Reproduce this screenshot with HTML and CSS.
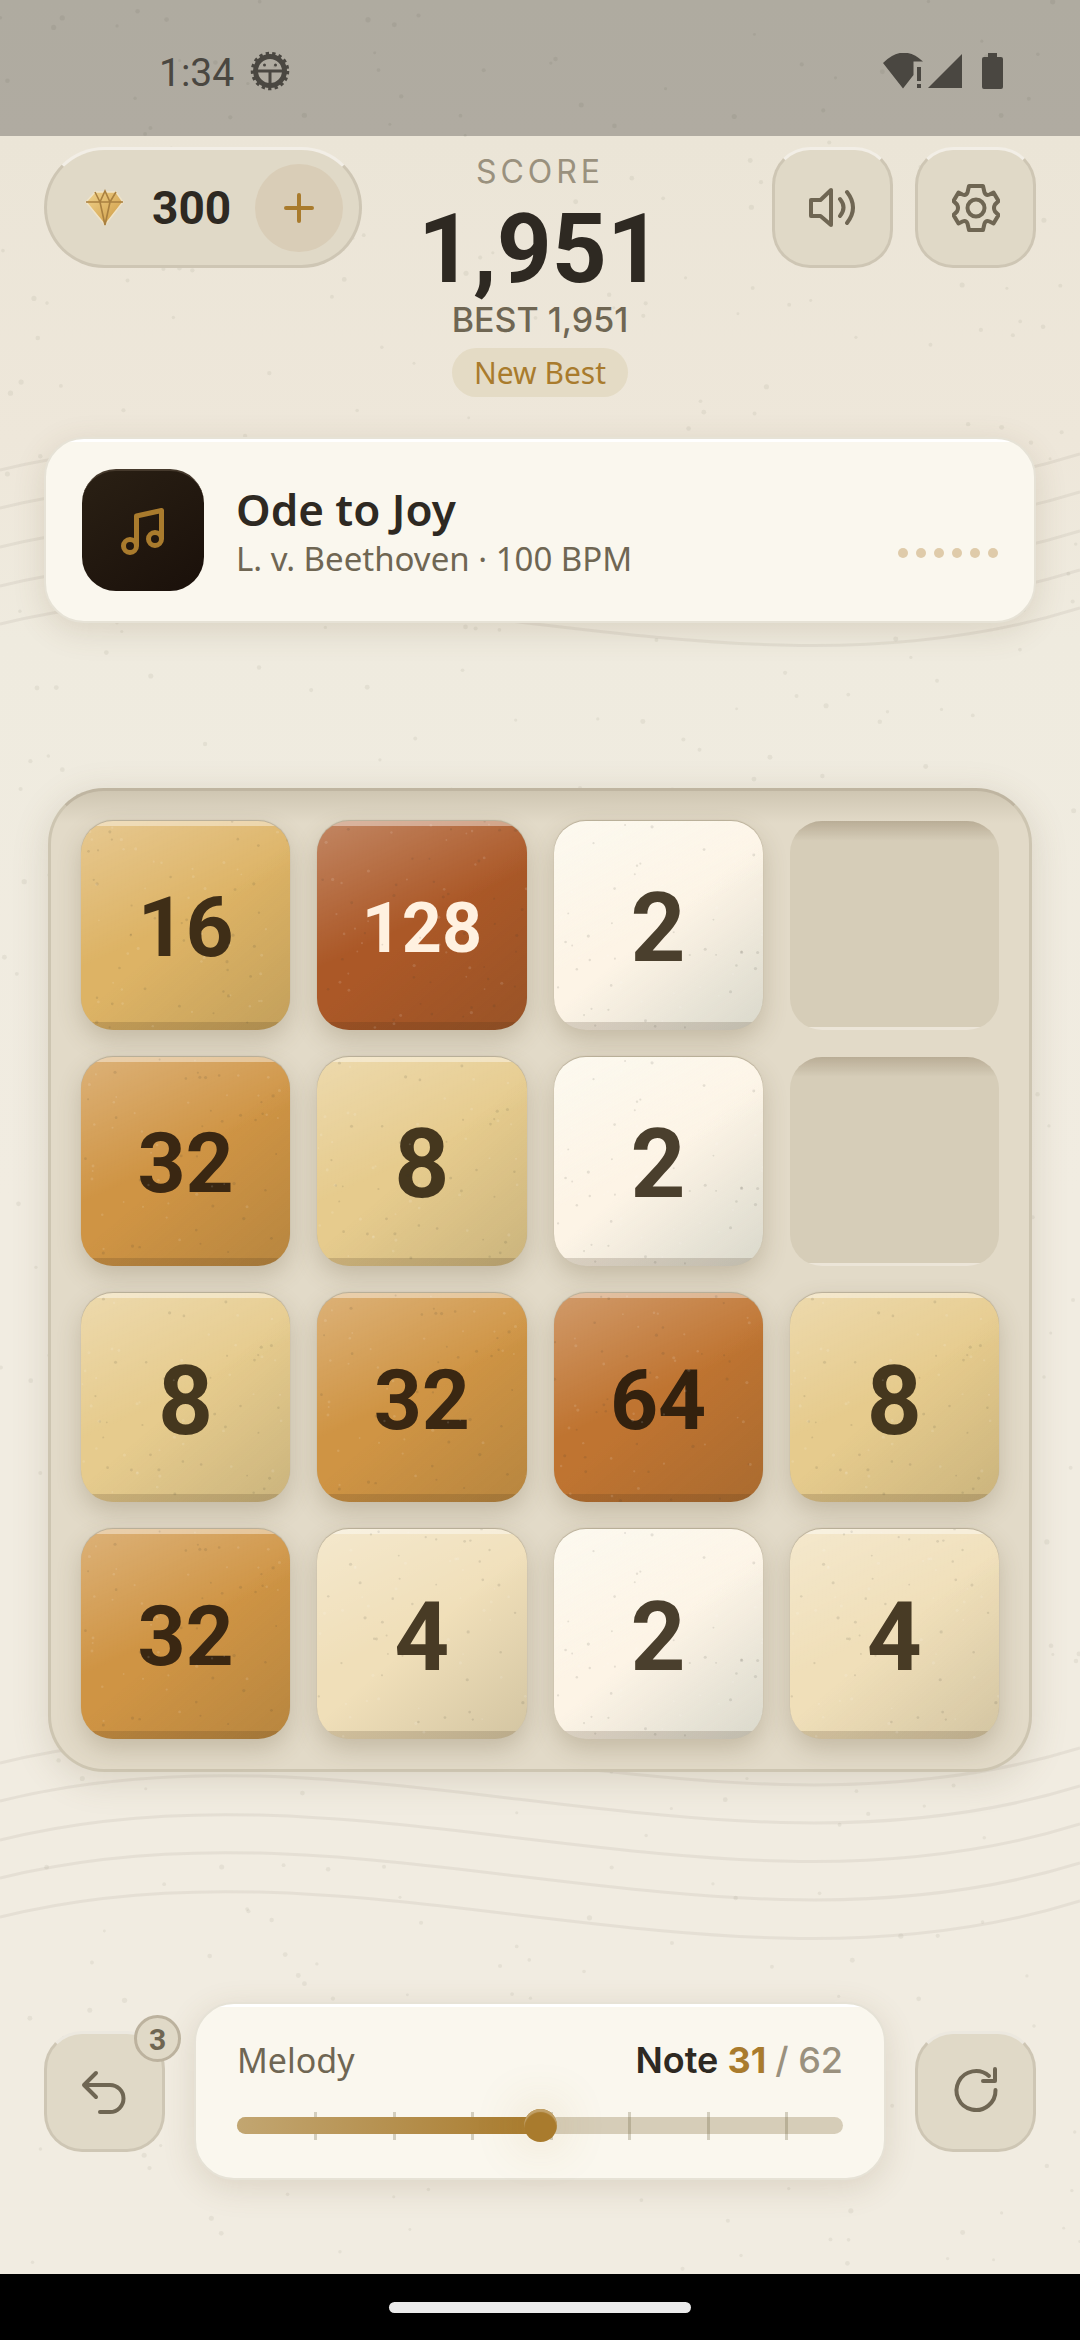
FILE: index.html
```html
<!DOCTYPE html>
<html lang="en">
<head>
<meta charset="utf-8">
<meta name="viewport" content="width=device-width, initial-scale=1">
<title>Melody 2048</title>
<link rel="stylesheet" href="styles.css">
</head>
<body>
<svg class="backdrop" viewBox="0 0 1080 2340" preserveAspectRatio="xMidYMin slice" aria-hidden="true">
  <g class="staff">
    <path d="M0 470C360 380 720 567 1080 454"/>
    <path d="M0 508C360 418 720 605 1080 492"/>
    <path d="M0 547C360 457 720 644 1080 531"/>
    <path d="M0 586C360 496 720 683 1080 570"/>
    <path d="M0 624C360 534 720 721 1080 608"/>
    <path d="M0 1763C360 1673 720 1860 1080 1748"/>
    <path d="M0 1801C360 1711 720 1898 1080 1786"/>
    <path d="M0 1840C360 1750 720 1937 1080 1824"/>
    <path d="M0 1878C360 1788 720 1975 1080 1863"/>
    <path d="M0 1917C360 1827 720 2014 1080 1901"/>
  </g>
  <g class="specks" data-specks="620" data-w="1080" data-h="2340" data-r="2.4" data-seed="7"></g>
</svg>

<div class="status">
  <span class="clock">1:34</span>
  <svg class="bug" viewBox="0 0 40 40" aria-hidden="true">
    <circle cx="20" cy="20" r="14.500" fill="none" stroke="#4a4741" stroke-width="5"/>
    <circle cx="20" cy="20" r="17.500" fill="none" stroke="#4a4741" stroke-width="3.500" stroke-dasharray="3.300 3.172"/>
    <path d="M6 20H34M20 20V35" stroke="#4a4741" stroke-width="3"/>
    <circle cx="14.500" cy="14" r="1.500" fill="#4a4741"/><circle cx="25.500" cy="14" r="1.500" fill="#4a4741"/>
  </svg>
  <svg class="signals" viewBox="0 0 120 36" aria-hidden="true">
    <path d="M0 10Q20-10 40 8.500H30.500V22L20 35.500Z"/>
    <path d="M34 14h4v14h-4zM34 31h4v4h-4zM45 35 79 1V35Z"/>
    <path d="M105 0h9v4h4q2 0 2 2v28q0 2-2 2h-17q-2 0-2-2V6q0-2 2-2h4z"/>
  </svg>
</div>

<header class="top">
  <div class="gems">
    <svg class="gem" viewBox="0 0 40 38" aria-hidden="true">
      <defs><linearGradient id="gold" x1="0" y1="0" x2="1" y2="1"><stop offset="0" stop-color="#f0d38d"/><stop offset="1" stop-color="#cd9840"/></linearGradient></defs>
      <path d="M10 3H31L38 13 20 36 1 13Z" fill="url(#gold)" stroke="#efe3c8" stroke-width="1.500"/>
      <path d="M1 13H38M10 3 15 13 20 2 25 13 31 3M15 13 20 36 25 13" fill="none" stroke="#a98040" stroke-width="1.600"/>
    </svg>
    <span class="gem-count">300</span>
    <button class="add" aria-label="Add gems"><svg viewBox="0 0 32 32"><path d="M16 3V29M3 16H29"/></svg></button>
  </div>
  <div class="score">
    <span class="score-label">SCORE</span>
    <strong class="score-value">1,951</strong>
    <span class="score-best">BEST 1,951</span>
    <span class="score-flag">New Best</span>
  </div>
  <div class="actions">
    <button class="key" aria-label="Sound"><svg viewBox="0 0 48 48"><path d="M2 16H11.500L22 6V41L11.500 32H2ZM31 15Q38 23.500 31 32M38 8Q50 23.500 38 39"/></svg></button>
    <button class="key" aria-label="Settings"><svg viewBox="0 0 48 48"><g transform="translate(24 24)"><path d="M-7-22H7L8.500-15.500Q10-12 13.500-13.500L17.500-15.500 22.500-7 19-3.500Q17 0 19 3.500L22.500 7 17.500 15.500 13.500 13.500Q10 12 8.500 15.500L7 22H-7L-8.500 15.500Q-10 12-13.500 13.500L-17.500 15.500-22.500 7-19 3.500Q-17 0-19-3.500L-22.500-7-17.500-15.500-13.500-13.500Q-10-12-8.500-15.500Z"/><circle r="8.500"/></g></svg></button>
  </div>
</header>

<section class="panel song">
  <div class="cover"><svg viewBox="0 0 48 48" aria-hidden="true"><circle cx="11" cy="39" r="6.500"/><circle cx="36" cy="32" r="6.500"/><path d="M17.500 39V9L42.500 3.500V32"/></svg></div>
  <div class="song-text">
    <h1>Ode to Joy</h1>
    <p>L. v. Beethoven · 100 BPM</p>
  </div>
  <div class="dots" aria-hidden="true"><i></i><i></i><i></i><i></i><i></i><i></i></div>
</section>

<main class="stage">
  <div class="board">
    <div class="tile t16">16</div><div class="tile t128">128</div><div class="tile t2">2</div><div class="slot"></div>
    <div class="tile t32">32</div><div class="tile t8">8</div><div class="tile t2">2</div><div class="slot"></div>
    <div class="tile t8">8</div><div class="tile t32">32</div><div class="tile t64">64</div><div class="tile t8">8</div>
    <div class="tile t32">32</div><div class="tile t4">4</div><div class="tile t2">2</div><div class="tile t4">4</div>
  </div>
</main>

<footer class="controls">
  <button class="key" aria-label="Undo, 3 left"><svg viewBox="0 0 48 48"><path d="M15 6 3 18 15 30M3 18H29A13.500 13.500 0 0 1 29 45H19"/></svg><span class="badge">3</span></button>
  <div class="panel melody">
    <div class="melody-head">
      <label for="note">Melody</label>
      <output for="note" class="note">Note <b>31</b> <span>/ 62</span></output>
    </div>
    <div class="slider">
      <div class="rail"></div>
      <div class="ticks" aria-hidden="true"><i></i><i></i><i></i><i></i><i></i><i></i><i></i></div>
      <div class="played" style="width: 50%"></div>
      <input id="note" type="range" min="0" max="62" value="31">
    </div>
  </div>
  <button class="key" aria-label="Restart"><svg viewBox="0 0 48 48"><path d="M43.500 23A19.500 19.500 0 1 1 37 9M43 2V14H31"/></svg></button>
</footer>

<nav class="gesture"><span></span></nav>
<script src="specks.js"></script>
</body>
</html>
```
FILE: styles.css
```css
* { box-sizing: border-box; }

body {
  margin: 0;
  min-height: 100vh;
  display: flex;
  flex-direction: column;
  position: relative;
  background: linear-gradient(#eae4d6 0, #ebe5d7 136px, #eee7da 440px, #efebdf 640px, #f1ece1 1200px);
  font-family: Inter, "Noto Sans", sans-serif;
  color: #2e2922;
}

button { border: 0; padding: 0; font: inherit; color: inherit; }
svg { display: block; }

.backdrop { position: absolute; inset: 0; width: 100%; height: 100%; z-index: -1; }
.staff path { fill: none; stroke: #6e6754; stroke-opacity: .09; stroke-width: 3; }
.specks { fill: #6f6a55; fill-opacity: .09; }

.status {
  height: 136px;
  padding: 0 77px 0 159px;
  display: flex;
  align-items: center;
  gap: 16px;
  background: rgba(0, 0, 0, .25);
}
.clock { font: 39px/48px Roboto, sans-serif; color: #4a4741; margin-top: 10px; }
.bug { width: 40px; height: 40px; margin-top: 6px; }
.signals { width: 120px; height: 36px; margin: 6px 0 0 auto; fill: #4a4741; }

.top {
  display: grid;
  grid-template-columns: 1fr auto 1fr;
  align-items: start;
  padding: 11px 44px 0;
}

.gems, .key {
  height: 121px;
  background: #e0d9c7;
  border: 3px solid #cec6b4;
  border-top-color: #f2eee6;
}
.gems {
  justify-self: start;
  display: flex;
  align-items: center;
  padding: 0 16px 0 38px;
  border-radius: 61px;
}
.gem { width: 40px; height: 38px; margin-right: 27px; }
.gem-count { font: 700 46px/54px Roboto, sans-serif; margin-right: 24px; }
.add { width: 88px; height: 88px; border-radius: 50%; background: #d9cdb7; display: grid; place-items: center; }
.add svg { width: 32px; height: 32px; fill: none; stroke: #a97b2d; stroke-width: 4; stroke-linecap: round; }

.actions { justify-self: end; display: flex; gap: 22px; }
.key { position: relative; width: 121px; border-radius: 38px; display: grid; place-items: center; flex: none; }
.key svg { width: 48px; height: 48px; fill: none; stroke: #6f6653; stroke-width: 4; stroke-linecap: round; stroke-linejoin: round; }

.score { display: flex; flex-direction: column; align-items: center; }
.score-label { font-size: 32px; line-height: 50px; letter-spacing: 4px; color: #9a917e; }
.score-value { font: 700 96px/104px Roboto, sans-serif; }
.score-best { font-size: 34px; line-height: 38px; font-weight: 500; color: #6f6653; }
.score-flag {
  margin-top: 9px;
  padding: 0 22px;
  border-radius: 25px;
  background: #e4dbc5;
  color: #a97b2d;
  font: 30px/49px "Noto Sans", sans-serif;
}

.panel {
  background: linear-gradient(#fff 3px, transparent 3px) #faf7ee;
  border: 2px solid #e6e2d6;
  border-radius: 40px;
  box-shadow: 0 8px 32px rgba(110, 85, 50, .16);
}

.song { margin: 40px 44px 0; padding: 30px 36px; display: flex; align-items: center; }
.cover {
  width: 122px;
  height: 122px;
  border-radius: 34px;
  display: grid;
  place-items: center;
  background: linear-gradient(145deg, #2a2014, #1a100a);
  border-top: 2px solid #45392c;
}
.cover svg { width: 48px; height: 48px; fill: none; stroke: #a97b2d; stroke-width: 5; stroke-linejoin: round; }
.song-text { margin-left: 32px; padding-top: 4px; }
h1 { margin: 0; font: 600 44px/54px "Noto Sans", sans-serif; }
p { margin: 0; font: 33px/46px "Noto Sans", sans-serif; color: #6f6653; }
.dots { margin: 46px 0 0 auto; display: flex; gap: 8px; }
.dots i { width: 10px; height: 10px; border-radius: 50%; background: #dfcbaa; }

.stage { flex: 1; display: flex; flex-direction: column; justify-content: center; padding: 0 48px 66px; }
.board {
  display: grid;
  grid-template-columns: repeat(4, 1fr);
  gap: 27px;
  padding: 30px;
  border: 3px solid #cdc5b1;
  border-top-color: #bfb5a1;
  border-radius: 56px;
  background: linear-gradient(#cfc6b2, rgba(207, 198, 178, 0) 32px) #e2dac8;
  box-shadow: 0 8px 36px rgba(110, 95, 60, .18);
}
.tile, .slot { aspect-ratio: 1; border-radius: 32px; }
.slot {
  background:
    linear-gradient(0deg, #ece5d8 3px, transparent 3px),
    linear-gradient(#b9ad96, rgba(185, 173, 150, 0) 20px),
    #d6cdb8;
}
.tile {
  position: relative;
  display: grid;
  place-items: center;
  padding-top: 6px;
  font: 700 96px/1 Roboto, sans-serif;
  background:
    linear-gradient(rgba(255, 255, 255, .4) 5px, transparent 5px),
    linear-gradient(0deg, rgba(60, 40, 20, .17) 8px, transparent 8px),
    linear-gradient(155deg, rgba(255, 255, 255, .28), rgba(255, 255, 255, 0) 48%),
    linear-gradient(140deg, rgba(60, 60, 40, 0) 50%, rgba(60, 60, 40, .16)),
    var(--face);
  box-shadow: 0 10px 24px rgba(100, 85, 50, .24), 0 -1px 1px rgba(120, 105, 75, .35);
}
.tile svg { position: absolute; inset: 0; width: 100%; height: 100%; border-radius: 32px; }
.tile .dark { fill: #3c3c32; fill-opacity: .12; }
.tile .light { fill: #fff; fill-opacity: .12; }
.t2 {
  --face: #fdf4e6;
  color: #4a3f2d;
  background:
    linear-gradient(0deg, rgba(60, 40, 20, .17) 8px, transparent 8px),
    linear-gradient(155deg, #fcf9ef, rgba(252, 249, 239, 0) 50%),
    linear-gradient(140deg, rgba(221, 219, 206, 0) 50%, #dddbce 95%),
    var(--face);
}
.t4 { --face: #f0dfb9; color: #483b25; }
.t8 { --face: #e6cb8d; color: #45371e; }
.t16 { --face: #ddb365; color: #3f2e17; font-size: 84px; }
.t32 { --face: #cf9444; color: #3a2712; font-size: 84px; }
.t64 { --face: #bf7431; color: #33210e; font-size: 84px; }
.t128 { --face: #ab5827; color: #fff1e0; font-size: 70px; }

.controls { display: flex; align-items: center; gap: 29px; padding: 0 44px 94px; }
.controls .key { border-top-color: #ece8df; }
.badge {
  position: absolute;
  top: -19px;
  right: -19px;
  width: 47px;
  height: 47px;
  border: 3px solid #bcb29e;
  border-radius: 50%;
  background: #e0d9c7;
  color: #6f6653;
  font: 700 30px/43px Roboto, sans-serif;
  text-align: center;
}
.melody { flex: 1; min-width: 0; padding: 34px 41px 36px; }
.melody-head { display: flex; justify-content: space-between; margin-bottom: 27px; }
.melody-head label { font: 34px/44px "Noto Sans", sans-serif; color: #6f6653; }
.note { font-size: 36px; line-height: 44px; font-weight: 600; }
.note b { color: #a97b2d; font-weight: 700; }
.note span { color: #9a917e; font-weight: 500; }

.slider { display: grid; align-items: center; }
.slider > * { grid-area: 1 / 1; }
.rail, .played { height: 17px; border-radius: 9px; }
.rail { background: #d6cdb8; }
.played { background: linear-gradient(90deg, #c2a671, #a97b2d); }
.ticks { display: flex; justify-content: space-between; padding: 0 55px 0 77px; }
.ticks i { width: 3px; height: 28px; background: rgba(110, 100, 70, .28); }
input[type=range] { appearance: none; margin: 0; width: 100%; height: 33px; background: none; }
input[type=range]::-webkit-slider-thumb {
  appearance: none;
  width: 33px;
  height: 33px;
  border-radius: 50%;
  background: #a97b2d;
  box-shadow: 0 0 50px rgba(169, 123, 45, .3), inset 0 3px 1px #c2a26a;
}

.gesture { height: 66px; background: #000; display: grid; place-items: center; }
.gesture span { width: 28%; height: 11px; border-radius: 6px; background: #ebebeb; }
```
FILE: specks.js
```js
// Paper grain: scatters small dots with a seeded generator so the pattern is stable.
const NS = "http://www.w3.org/2000/svg";

function random(seed) {
  return () => {
    seed = (seed * 1664525 + 1013904223) % 4294967296;
    return seed / 4294967296;
  };
}

function scatter(group, count, w, h, radius, seed) {
  const next = random(seed);
  for (let i = 0; i < count; i++) {
    const dot = document.createElementNS(NS, "circle");
    dot.setAttribute("cx", next() * w);
    dot.setAttribute("cy", next() * h);
    dot.setAttribute("r", radius * (0.6 + next() * 0.5));
    group.append(dot);
  }
}

document.querySelectorAll("[data-specks]").forEach((g) => {
  const d = g.dataset;
  scatter(g, +d.specks, +d.w, +d.h, +d.r, +d.seed);
});

document.querySelectorAll(".tile").forEach((tile) => {
  const value = parseInt(tile.textContent, 10);
  const svg = document.createElementNS(NS, "svg");
  svg.setAttribute("viewBox", "0 0 209 209");
  svg.setAttribute("aria-hidden", "true");
  ["dark", "light"].forEach((tone, i) => {
    const g = document.createElementNS(NS, "g");
    g.setAttribute("class", tone);
    scatter(g, 38, 209, 209, 1.5, value * 31 + i * 977);
    svg.append(g);
  });
  tile.append(svg);
});
```
